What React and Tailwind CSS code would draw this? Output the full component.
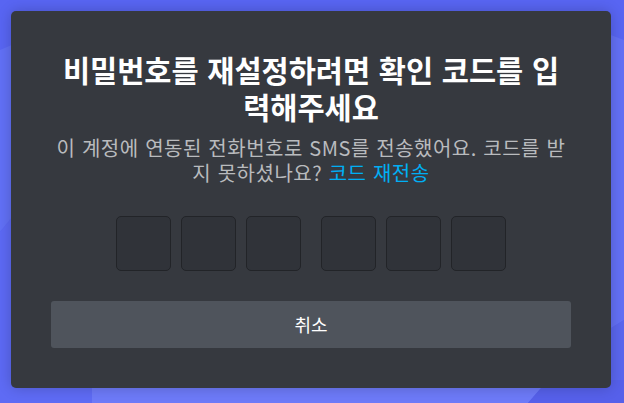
import React from 'react';

const CodeBox = () => (
    <div className="w-[55px] h-[55px] rounded-[5px] bg-[#303339] border border-[#222428]"/>
);

const App = () => {
    return (
        <div className="relative w-[624px] h-[403px] overflow-hidden bg-[#5865f2] font-['Noto_Sans_CJK_KR',sans-serif]">
            {/* background art */}
            <svg className="absolute inset-0" width="624" height="403" viewBox="0 0 624 403">
                <polygon points="0,50 14,44 14,215 0,232" fill="#6170f5"/>
                <polygon points="0,232 14,215 14,403 0,403" fill="#5c69f3"/>
                <polygon points="0,380 92,380 92,403 0,403" fill="#5e6bf4"/>
                <polygon points="92,380 548,380 528,403 92,403" fill="#6d7af8"/>
                <polygon points="548,380 624,380 624,403 528,403" fill="#5660ea"/>
                <polygon points="608,34 624,40 624,320 608,330" fill="#6370f5"/>
                <polygon points="608,330 624,320 624,380 608,380" fill="#5a66ee"/>
            </svg>

            <div className="relative ml-[11px] mt-[11px] w-[600px] rounded-[5px] bg-[#36393f] px-10 pt-10 pb-10 shadow-[0_0_14px_rgba(0,0,0,0.2)]">
                <h1 className="text-center text-white font-bold text-[29.5px] leading-[37px] [word-spacing:2px]">
                    비밀번호를 재설정하려면 확인 코드를 입<br/>력해주세요
                </h1>
                <p className="mt-[10px] text-center text-[#b9bbbe] text-[20px] leading-[25px] tracking-[0.5px] [word-spacing:1.5px]">
                    이 계정에 연동된 전화번호로 SMS를 전송했어요. 코드를 받<br/>지 못하셨나요? <span className="text-[#00aff4]">코드 재전송</span>
                </p>

                {/* code inputs */}
                <div className="mt-[31px] flex justify-center gap-5">
                    <div className="flex gap-[10px]">
                        <CodeBox/>
                        <CodeBox/>
                        <CodeBox/>
                    </div>
                    <div className="flex gap-[10px]">
                        <CodeBox/>
                        <CodeBox/>
                        <CodeBox/>
                    </div>
                </div>

                <button className="mt-[30px] w-full h-[47px] rounded-[3px] bg-[#4f545c] text-white text-[18px] font-normal">
                    취소
                </button>
            </div>
        </div>
    );
};

export default App;
